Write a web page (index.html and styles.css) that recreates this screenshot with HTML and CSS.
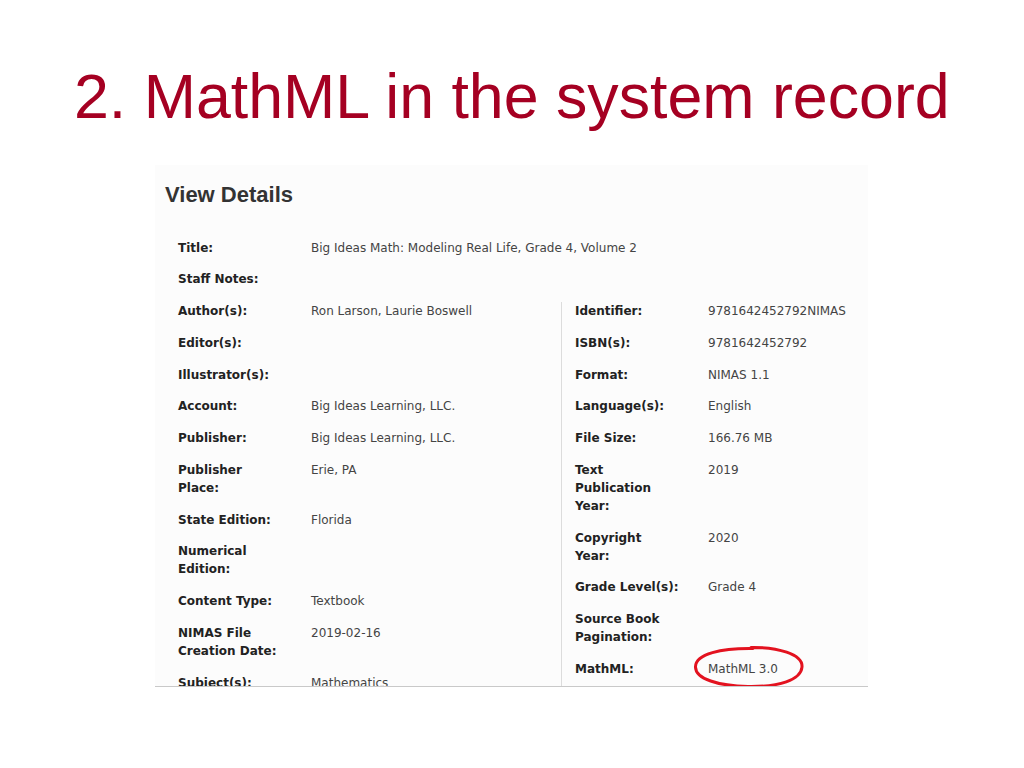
FILE: index.html
```html
<!DOCTYPE html>
<html lang="en">
<head>
<meta charset="utf-8">
<title>2. MathML in the system record</title>
<link rel="stylesheet" href="styles.css">
</head>
<body>
<h1 class="slide-title">2. MathML in the system record</h1>
<section class="details">
  <h2 class="details-heading">View Details</h2>
  <div class="details-table">
    <dl class="rows rows-full">
      <dt>Title:</dt><dd>Big Ideas Math: Modeling Real Life, Grade 4, Volume 2</dd>
      <dt>Staff Notes:</dt><dd></dd>
    </dl>
    <div class="cols">
      <dl class="rows col-left">
        <dt>Author(s):</dt><dd>Ron Larson, Laurie Boswell</dd>
        <dt>Editor(s):</dt><dd></dd>
        <dt>Illustrator(s):</dt><dd></dd>
        <dt>Account:</dt><dd>Big Ideas Learning, LLC.</dd>
        <dt>Publisher:</dt><dd>Big Ideas Learning, LLC.</dd>
        <dt>Publisher Place:</dt><dd>Erie, PA</dd>
        <dt>State Edition:</dt><dd>Florida</dd>
        <dt>Numerical Edition:</dt><dd></dd>
        <dt>Content Type:</dt><dd>Textbook</dd>
        <dt>NIMAS File Creation Date:</dt><dd>2019-02-16</dd>
        <dt>Subject(s):</dt><dd>Mathematics</dd>
      </dl>
      <dl class="rows col-right">
        <dt>Identifier:</dt><dd>9781642452792NIMAS</dd>
        <dt>ISBN(s):</dt><dd>9781642452792</dd>
        <dt>Format:</dt><dd>NIMAS 1.1</dd>
        <dt>Language(s):</dt><dd>English</dd>
        <dt>File Size:</dt><dd>166.76 MB</dd>
        <dt>Text Publication Year:</dt><dd>2019</dd>
        <dt>Copyright Year:</dt><dd>2020</dd>
        <dt>Grade Level(s):</dt><dd>Grade 4</dd>
        <dt>Source Book Pagination:</dt><dd></dd>
        <dt>MathML:</dt><dd class="highlighted">MathML 3.0<svg class="circle-mark" width="116" height="46" viewBox="0 0 116 46" aria-hidden="true"><path d="M60 3.5 C 86 3, 112 10, 111 23 C 110 36, 88 43, 57 42.5 C 28 42, 4 35, 4.5 22.5 C 5 10, 30 4, 62 4.5" fill="none" stroke="#e3121f" stroke-width="3" stroke-linecap="round"/></svg></dd>
      </dl>
    </div>
  </div>
</section>
</body>
</html>
```
FILE: styles.css
```css
html, body {
  margin: 0;
  padding: 0;
  background: #ffffff;
}

.slide-title {
  margin: 65px 0 0 74px;
  font-family: "Liberation Sans", Arial, sans-serif;
  font-weight: normal;
  font-size: 62.7px;
  line-height: 1;
  color: #a50022;
  white-space: nowrap;
}

.details {
  margin: 37.5px 0 0 155px;
  width: 713px;
  background: #fcfcfc;
}

.details-heading {
  margin: 0;
  padding: 18.4px 0 0 10px;
  font-family: "Liberation Sans", Arial, sans-serif;
  font-weight: bold;
  font-size: 22px;
  line-height: 1;
  color: #333333;
}

.details-table {
  margin-top: 17px;
  padding-top: 16px;
  font-family: "DejaVu Sans", Verdana, sans-serif;
  font-size: 12px;
  line-height: 18px;
}

.rows {
  display: grid;
  grid-template-columns: 105px 1fr;
  column-gap: 28px;
  row-gap: 13.75px;
  margin: 0;
  align-content: start;
}

.rows dt {
  font-weight: bold;
  color: #222222;
}

.rows dd {
  margin: 0;
  color: #444444;
}

.rows-full {
  padding-left: 23px;
  margin-bottom: 13.75px;
}

.cols {
  display: grid;
  grid-template-columns: 406px 1fr;
  height: 384px;
  overflow: hidden;
  border-bottom: 1px solid #c9c9c9;
}

.col-left {
  padding-left: 23px;
}

.col-right {
  padding-left: 13px;
  border-left: 1px solid #dcdcdc;
}

.highlighted {
  position: relative;
}

.circle-mark {
  position: absolute;
  left: -17px;
  top: -16px;
}
```
